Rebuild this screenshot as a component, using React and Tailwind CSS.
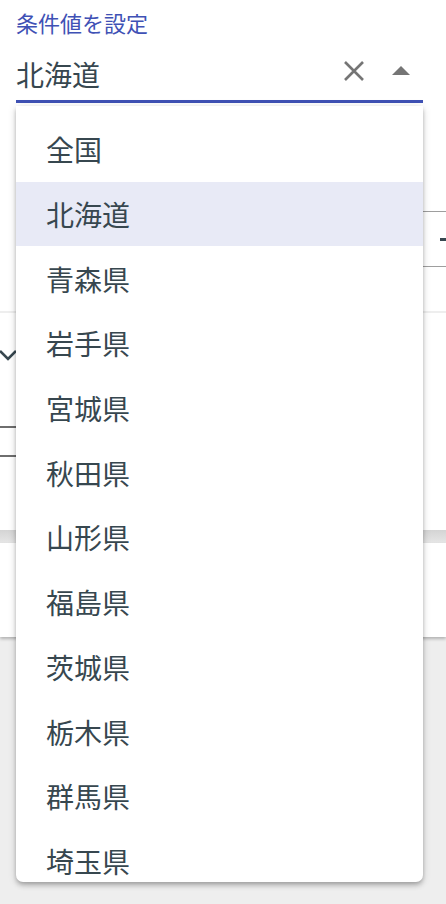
const prefectures = [
  '全国',
  '北海道',
  '青森県',
  '岩手県',
  '宮城県',
  '秋田県',
  '山形県',
  '福島県',
  '茨城県',
  '栃木県',
  '群馬県',
  '埼玉県',
]

function ClearIcon() {
  return (
    <svg width="22" height="22" viewBox="0 0 22 22" className="shrink-0">
      <path d="M2 2 L20 20 M20 2 L2 20" stroke="#757575" strokeWidth="2.6" strokeLinecap="butt" />
    </svg>
  )
}

function ArrowUp() {
  return (
    <svg width="18" height="9" viewBox="0 0 18 9" className="shrink-0">
      <path d="M0 9 L9 0 L18 9 Z" fill="#757575" />
    </svg>
  )
}

export default function App() {
  const selected = '北海道'

  return (
    <div className="relative min-h-[904px] bg-[#eeeeee] font-['Noto_Sans_CJK_JP',sans-serif] overflow-hidden">
      {/* top section */}
      <div className="bg-white h-[311px]">
        <div className="pl-4 pr-[23px] pt-[7px]">
          <label className="block text-[22px] leading-[31px] text-[#3f51b5]">条件値を設定</label>
          <div className="mt-[3px] h-[62px] flex items-center border-b-[3px] border-[#3f51b5]">
            <span className="flex-1 pt-[7px] text-[28px] leading-[40px] text-[#37474f]">{selected}</span>
            <ClearIcon />
            <div className="w-[27px]" />
            <ArrowUp />
            <div className="w-[13px]" />
          </div>
        </div>
        <div className="mt-[108px] ml-auto w-[160px] h-[56px] border-y-[1.5px] border-[#9e9e9e] flex items-center justify-end">
          <div className="w-[6px] h-[3px] bg-[#37474f]" />
        </div>
      </div>
      <div className="h-[2px] bg-[#eeeeee]" />

      {/* middle section */}
      <div className="bg-white h-[217px]">
        <div className="pt-[36px]">
          <svg width="16" height="12" viewBox="0 0 16 12">
            <path d="M0 2 L8 10 L16 2" stroke="#37474f" strokeWidth="2.6" fill="none" />
          </svg>
        </div>
        <div className="mt-[65px] w-[200px] h-[31px] border-y-[2.5px] border-[#6e6e6e]" />
      </div>
      <div className="h-[13px] bg-gradient-to-b from-[#d4d4d4] to-[#e6e6e6]" />
      <div className="bg-white h-[94px] shadow-[0_2px_3px_rgba(0,0,0,0.25)]" />

      {/* dropdown */}
      <div className="absolute left-4 top-[106px] w-[407px] h-[776px] bg-white rounded-b-[7px] overflow-hidden shadow-[0_2px_4px_-1px_rgba(0,0,0,0.2),0_4px_5px_0_rgba(0,0,0,0.14),0_1px_10px_0_rgba(0,0,0,0.12)]">
        <ul className="pt-[11px]">
          {prefectures.map(p => (
            <li
              key={p}
              className={`h-[64.7px] flex items-center pl-[30px] text-[28px] text-[#37474f] ${p === selected ? 'bg-[#e8eaf6]' : ''}`}
            >
              {p}
            </li>
          ))}
        </ul>
      </div>
    </div>
  )
}
